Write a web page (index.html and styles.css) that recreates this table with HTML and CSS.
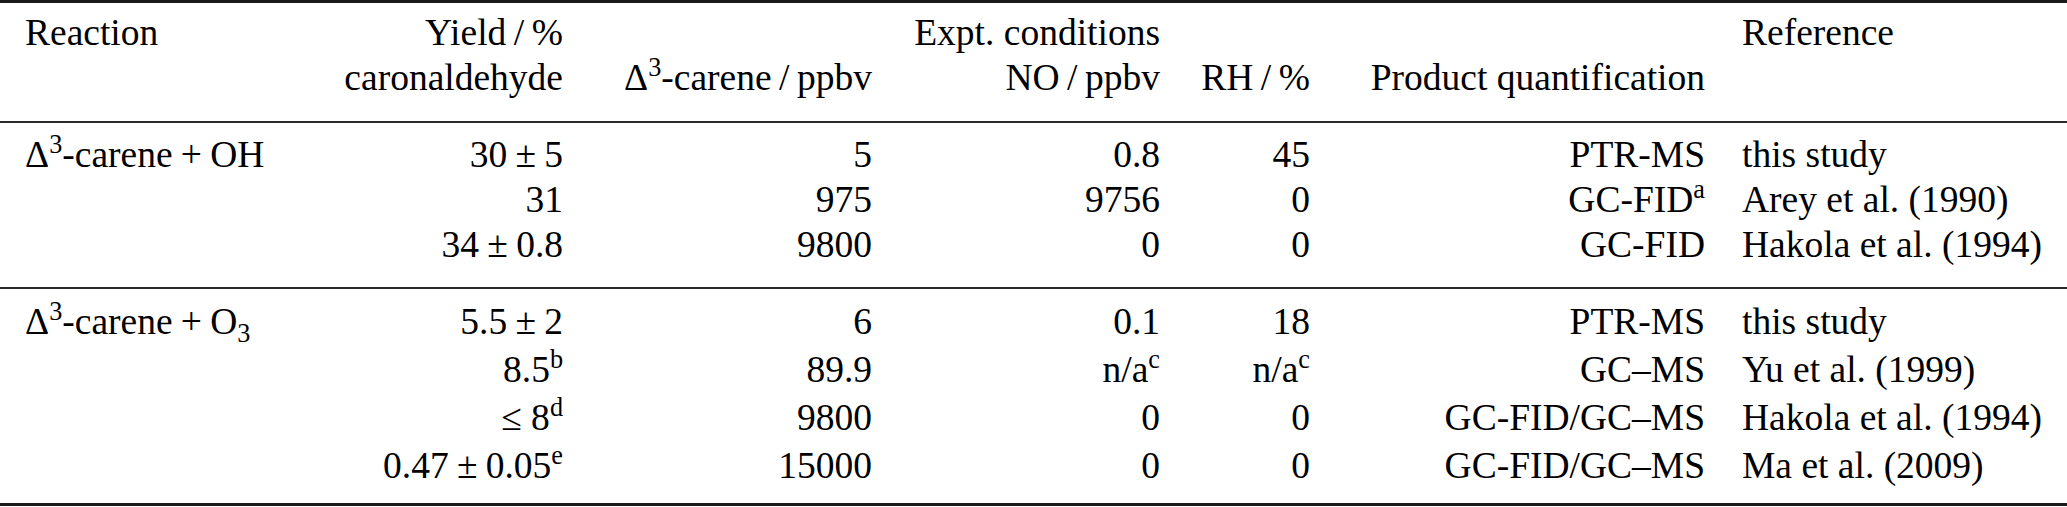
FILE: index.html
```html
<!DOCTYPE html>
<html lang="en">

<head>
    <meta charset="UTF-8">
    <title>Caronaldehyde yields</title>
    <link rel="stylesheet" href="styles.css">
</head>

<body>
    <table class="yields">
        <colgroup>
            <col class="c-reaction">
            <col class="c-yield">
            <col class="c-carene">
            <col class="c-no">
            <col class="c-rh">
            <col class="c-product">
            <col class="c-ref">
        </colgroup>
        <thead>
            <tr class="first">
                <th class="left">Reaction</th>
                <th>Yield&thinsp;/&thinsp;%</th>
                <th colspan="2">Expt. conditions</th>
                <th></th>
                <th></th>
                <th class="left ref">Reference</th>
            </tr>
            <tr class="last">
                <th></th>
                <th>caronaldehyde</th>
                <th>&Delta;<span class="sup">3</span>-carene&thinsp;/&thinsp;ppbv</th>
                <th>NO&thinsp;/&thinsp;ppbv</th>
                <th>RH&thinsp;/&thinsp;%</th>
                <th>Product quantification</th>
                <th></th>
            </tr>
        </thead>
        <tbody class="oh">
            <tr class="first">
                <td class="left">&Delta;<span class="sup">3</span>-carene<span class="op">+</span>OH</td>
                <td>30<span class="op">&plusmn;</span>5</td>
                <td>5</td>
                <td>0.8</td>
                <td>45</td>
                <td>PTR-MS</td>
                <td class="left ref">this study</td>
            </tr>
            <tr>
                <td></td>
                <td>31</td>
                <td>975</td>
                <td>9756</td>
                <td>0</td>
                <td>GC-FID<span class="sup">a</span></td>
                <td class="left ref">Arey et al. (1990)</td>
            </tr>
            <tr class="last">
                <td></td>
                <td>34<span class="op">&plusmn;</span>0.8</td>
                <td>9800</td>
                <td>0</td>
                <td>0</td>
                <td>GC-FID</td>
                <td class="left ref">Hakola et al. (1994)</td>
            </tr>
        </tbody>
        <tbody class="o3">
            <tr class="first">
                <td class="left">&Delta;<span class="sup">3</span>-carene<span class="op">+</span>O<span class="sub">3</span></td>
                <td>5.5<span class="op">&plusmn;</span>2</td>
                <td>6</td>
                <td>0.1</td>
                <td>18</td>
                <td>PTR-MS</td>
                <td class="left ref">this study</td>
            </tr>
            <tr>
                <td></td>
                <td>8.5<span class="sup">b</span></td>
                <td>89.9</td>
                <td>n/a<span class="sup">c</span></td>
                <td>n/a<span class="sup">c</span></td>
                <td>GC&ndash;MS</td>
                <td class="left ref">Yu et al. (1999)</td>
            </tr>
            <tr>
                <td></td>
                <td>&le;&nbsp;8<span class="sup">d</span></td>
                <td>9800</td>
                <td>0</td>
                <td>0</td>
                <td>GC-FID/GC&ndash;MS</td>
                <td class="left ref">Hakola et al. (1994)</td>
            </tr>
            <tr class="last">
                <td></td>
                <td>0.47<span class="op">&plusmn;</span>0.05<span class="sup">e</span></td>
                <td>15000</td>
                <td>0</td>
                <td>0</td>
                <td>GC-FID/GC&ndash;MS</td>
                <td class="left ref">Ma et al. (2009)</td>
            </tr>
        </tbody>
    </table>
</body>

</html>
```

FILE: styles.css
```css
body {
    margin: 0;
    background-color: white;
    color: #000;
    font-family: "Liberation Serif", "Times New Roman", serif;
}

.yields {
    width: 2067px;
    table-layout: fixed;
    border-collapse: collapse;
    border-top: 3px solid #1a1a1a;
    border-bottom: 3px solid #1a1a1a;
    font-size: 37.5px;
    line-height: 45px;
}

.c-reaction { width: 300px; }
.c-yield { width: 263px; }
.c-carene { width: 309px; }
.c-no { width: 288px; }
.c-rh { width: 150px; }
.c-product { width: 395px; }
.c-ref { width: 362px; }

th,
td {
    padding: 0;
    font-weight: normal;
    text-align: right;
    white-space: nowrap;
}

.left {
    text-align: left;
    padding-left: 25px;
}

.left.ref {
    padding-left: 37px;
}

thead {
    border-bottom: 2px solid #2a2a2a;
}

thead .first th {
    padding-top: 7px;
}

thead .last th {
    padding-bottom: 21px;
}

tbody.oh {
    border-bottom: 2px solid #2a2a2a;
}

tbody .first td {
    padding-top: 9px;
}

tbody.oh .last td {
    padding-bottom: 20px;
}

tbody.o3 {
    line-height: 48px;
}

tbody.o3 .last td {
    padding-bottom: 13px;
}

.op {
    padding: 0 0.22em;
}

.sup {
    font-size: 0.7em;
    line-height: 0;
    vertical-align: 0.55em;
}

.sub {
    font-size: 0.7em;
    line-height: 0;
    vertical-align: -0.3em;
}
```
